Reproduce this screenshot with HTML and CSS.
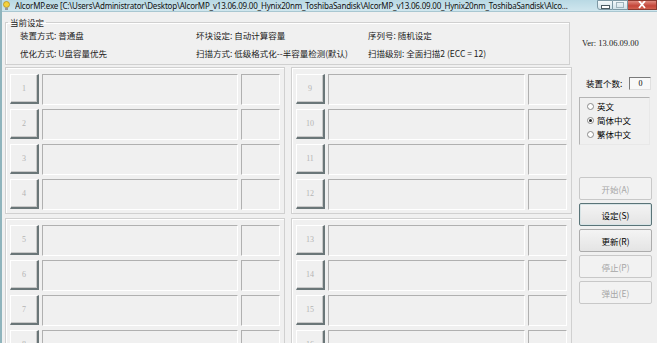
FILE: index.html
```html
<!DOCTYPE html>
<html lang="zh-CN">
<head>
  <meta charset="UTF-8">
  <title>AlcorMP</title>
  <link rel="stylesheet" href="styles.css">
</head>
<body>
<div class="window">

  <!-- Title bar -->
  <div class="titlebar">
    <svg class="app-icon" width="7" height="10" viewBox="0 0 7 10">
      <circle cx="3.5" cy="3.5" r="3" fill="#f5d23c" stroke="#b8901a" stroke-width="0.8"/>
      <rect x="2" y="6.5" width="3" height="2.5" fill="#9a9a9a"/>
    </svg>
    <span class="title">AlcorMP.exe [C:\Users\Administrator\Desktop\AlcorMP_v13.06.09.00_Hynix20nm_ToshibaSandisk\AlcorMP_v13.06.09.00_Hynix20nm_ToshibaSandisk\Alco...</span>
    <div class="caption">
      <span class="cap cap-min"><i></i></span>
      <span class="cap cap-max"><i></i></span>
      <span class="cap cap-close">
        <svg width="10" height="8" viewBox="0 0 10 8"><path d="M2 0 L8 7 M8 0 L2 7" stroke="#fff" stroke-width="1.8"/></svg>
      </span>
    </div>
  </div>

  <div class="client">
    <div class="main">
      <fieldset class="current">
        <legend>当前设定</legend>
        <div class="settings">
          <span>装置方式: 普通盘</span>
          <span>坏块设定: 自动计算容量</span>
          <span>序列号: 随机设定</span>
          <span>优化方式: U盘容量优先</span>
          <span>扫描方式: 低级格式化--半容量检测(默认)</span>
          <span>扫描级别: 全面扫描2 (ECC = 12)</span>
        </div>
      </fieldset>

      <div class="slots">
        <div class="slot-group">
          <div class="slot"><span class="num">1</span><span class="info"></span><span class="cap-box"></span></div>
          <div class="slot"><span class="num">2</span><span class="info"></span><span class="cap-box"></span></div>
          <div class="slot"><span class="num">3</span><span class="info"></span><span class="cap-box"></span></div>
          <div class="slot"><span class="num">4</span><span class="info"></span><span class="cap-box"></span></div>
        </div>
        <div class="slot-group">
          <div class="slot"><span class="num">9</span><span class="info"></span><span class="cap-box"></span></div>
          <div class="slot"><span class="num">10</span><span class="info"></span><span class="cap-box"></span></div>
          <div class="slot"><span class="num">11</span><span class="info"></span><span class="cap-box"></span></div>
          <div class="slot"><span class="num">12</span><span class="info"></span><span class="cap-box"></span></div>
        </div>
        <div class="slot-group">
          <div class="slot"><span class="num">5</span><span class="info"></span><span class="cap-box"></span></div>
          <div class="slot"><span class="num">6</span><span class="info"></span><span class="cap-box"></span></div>
          <div class="slot"><span class="num">7</span><span class="info"></span><span class="cap-box"></span></div>
          <div class="slot"><span class="num">8</span><span class="info"></span><span class="cap-box"></span></div>
        </div>
        <div class="slot-group">
          <div class="slot"><span class="num">13</span><span class="info"></span><span class="cap-box"></span></div>
          <div class="slot"><span class="num">14</span><span class="info"></span><span class="cap-box"></span></div>
          <div class="slot"><span class="num">15</span><span class="info"></span><span class="cap-box"></span></div>
          <div class="slot"><span class="num">16</span><span class="info"></span><span class="cap-box"></span></div>
        </div>
      </div>
    </div>

    <!-- Side panel -->
    <div class="side">
      <div class="ver">Ver: 13.06.09.00</div>
      <div class="count">
        <span>装置个数:</span>
        <span class="count-box">0</span>
      </div>
      <div class="lang">
        <label class="radio"><span class="dot"></span>英文</label>
        <label class="radio checked"><span class="dot"></span>简体中文</label>
        <label class="radio"><span class="dot"></span>繁体中文</label>
      </div>
      <div class="buttons">
        <button class="btn" disabled>开始(A)</button>
        <button class="btn focus">设定(S)</button>
        <button class="btn">更新(R)</button>
        <button class="btn" disabled>停止(P)</button>
        <button class="btn" disabled>弹出(E)</button>
      </div>
    </div>
  </div>

</div>
</body>
</html>
```

FILE: styles.css
```css
body { margin: 0; background: #f0f0f0; font-family: "Noto Sans CJK SC", "Liberation Sans", sans-serif; }
.window {
  width: 657px;
  height: 343px;
  overflow: hidden;
  background: #f0f0f0;
  border-left: 2px solid #8fb4bc;
  box-sizing: border-box;
}

/* Title bar */
.titlebar {
  height: 12px;
  display: flex;
  align-items: center;
  background: linear-gradient(#b9d9e4, #cfe6ee);
  border-bottom: 1px solid #a9c7d1;
  box-sizing: border-box;
}
.app-icon { margin: 0 5px 0 1px; flex: none; }
.title {
  font-family: "Noto Sans", sans-serif;
  font-size: 8px;
  letter-spacing: -0.2px;
  line-height: 12px;
  color: #111;
  white-space: nowrap;
  flex: 1;
  overflow: hidden;
}
.caption { display: flex; align-self: flex-start; flex: none; margin-left: 4px; }
.cap {
  height: 10px;
  box-sizing: border-box;
  border: 1px solid #7d98a4;
  background: linear-gradient(#f2f8fa, #d2e3ea);
  display: flex;
  align-items: center;
  justify-content: center;
}
.cap-min { width: 16px; border-radius: 0 0 0 3px; }
.cap-max { width: 15px; border-left: none; }
.cap-min i { width: 7px; height: 2px; background: #fff; border: 1px solid #4b5b63; margin-top: 3px; }
.cap-max i { width: 6px; height: 4px; border: 1px solid #a0b4bd; }
.cap-close {
  width: 29px;
  border-color: #8b3a30;
  border-left: none;
  background: linear-gradient(#e08a7e, #c4463a 60%, #d2604f);
}

/* Client */
.client { display: flex; }
.main { width: 567px; margin-left: 3px; }

.current {
  margin: 4px 2px 0 0;
  padding: 0 0 4px 14px;
  border: 1px solid #d0d0d0;
  box-shadow: inset 1px 1px #fff;
  min-width: 0;
}
.current legend {
  font-size: 8.5px;
  line-height: 12px;
  padding: 0 2px;
  margin-left: -12px;
  color: #222;
}
.settings {
  display: grid;
  grid-template-columns: 176px 172px 1fr;
  grid-auto-rows: 14px;
  row-gap: 4px;
  font-size: 8.5px;
  line-height: 14px;
  color: #222;
  white-space: nowrap;
}

/* Slots */
.slots {
  margin-top: 2px;
  display: grid;
  grid-template-columns: 280px 281px;
  column-gap: 6px;
  row-gap: 4px;
}
.slot-group {
  border: 1px solid #d0d0d0;
  box-shadow: inset 1px 1px #fff;
  padding: 6px 4px 3px 4px;
  display: flex;
  flex-direction: column;
  gap: 4px;
}
.slot { display: flex; gap: 3px; height: 31px; }
.num {
  width: 29px;
  height: 30px;
  box-sizing: border-box;
  border-top: 1px solid #fff;
  border-left: 1px solid #fff;
  border-right: 2px solid #6a7678;
  border-bottom: 2px solid #6a7678;
  box-shadow: inset -1px -1px #c8c8c8;
  display: flex;
  align-items: center;
  justify-content: center;
  font-family: "Liberation Serif", serif;
  font-size: 8px;
  color: #b4b4b4;
}
.info, .cap-box {
  box-sizing: border-box;
  border-top: 1px solid #b0b0b0;
  border-left: 1px solid #b0b0b0;
  border-right: 1px solid #fff;
  border-bottom: 1px solid #fff;
}
.info { flex: 1; }
.cap-box { width: 39px; }

/* Side panel */
.side { width: 73px; margin-left: 7px; display: flex; flex-direction: column; }
.ver {
  margin-top: 25px;
  padding-left: 3px;
  font-family: "Liberation Serif", serif;
  font-size: 8.5px;
  line-height: 12px;
  color: #222;
  white-space: nowrap;
}
.count {
  margin-top: 27px;
  padding-left: 7px;
  display: flex;
  align-items: center;
  height: 14px;
  font-size: 8.5px;
  white-space: nowrap;
}
.count-box {
  margin-left: 7px;
  width: 22px;
  height: 13px;
  box-sizing: border-box;
  border: 1px solid #7a7a7a;
  border-right-color: #e0e0e0;
  border-bottom-color: #e0e0e0;
  background: #f8f8f8;
  text-align: center;
  font-family: "Liberation Serif", serif;
  font-size: 8px;
  line-height: 11px;
}
.lang {
  margin-top: 7px;
  width: 71px;
  box-sizing: border-box;
  border: 1px solid #b4b4b4;
  border-right-color: #e8e8e8;
  border-bottom-color: #e8e8e8;
  padding: 1px 0 3px 7px;
  display: flex;
  flex-direction: column;
}
.radio {
  display: flex;
  align-items: center;
  gap: 3px;
  height: 14px;
  font-size: 8.5px;
}
.dot {
  width: 7px;
  height: 7px;
  box-sizing: border-box;
  border-radius: 50%;
  border: 1px solid #8a8a8a;
  background: #fff;
  position: relative;
}
.radio.checked .dot::after {
  content: "";
  position: absolute;
  left: 1px;
  top: 1px;
  width: 3px;
  height: 3px;
  border-radius: 50%;
  background: #222;
}
.buttons { margin-top: 32px; display: flex; flex-direction: column; gap: 3px; }
.btn {
  width: 73px;
  height: 23px;
  margin: 0;
  padding: 0;
  border: 1px solid #acacac;
  border-radius: 2px;
  background: linear-gradient(#f4f4f4, #e4e4e4);
  font-family: "Noto Sans CJK SC", sans-serif;
  font-size: 8.5px;
  color: #000;
}
.btn:disabled { border-color: #c8c8c8; background: #f2f2f2; color: #a6a6a6; }
.btn.focus { border-color: #5a7478; box-shadow: inset 0 0 0 1px #d8e4e6; }
```
